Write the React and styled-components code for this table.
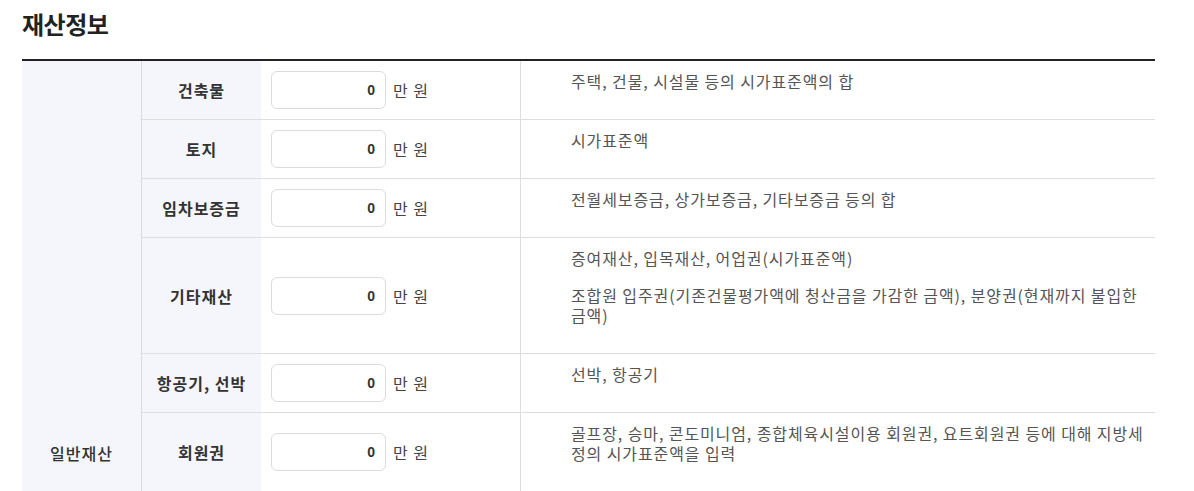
import React from 'react';
import styled, { createGlobalStyle } from 'styled-components';

const GlobalStyle = createGlobalStyle`
  body {
    margin: 0;
    background: #fff;
    font-family: "Noto Sans CJK KR", "Noto Sans", sans-serif;
    overflow: hidden;
  }
`;

const Page = styled.div`
  padding: 0 39px 0 22px;
`;

const Title = styled.h2`
  margin: 0;
  padding: 7px 0 0;
  height: 59px;
  box-sizing: border-box;
  font-size: 24px;
  line-height: 34px;
  font-weight: 700;
  color: #222;
  letter-spacing: -0.5px;
`;

const Table = styled.div`
  display: flex;
  border-top: 2px solid #222;
`;

const GroupCell = styled.div`
  width: 120px;
  flex-shrink: 0;
  background: #f5f6fb;
  border-right: 1px solid #dddddd;
  display: flex;
  align-items: flex-end;
  justify-content: center;
  padding-bottom: 28px;
  box-sizing: border-box;
  font-size: 16px;
  font-weight: 500;
  letter-spacing: 1px;
  color: #333;
  line-height: 22px;
`;

const Rows = styled.div`
  flex: 1;
  display: flex;
  flex-direction: column;
`;

const Row = styled.div`
  display: grid;
  grid-template-columns: 119px 260px 1fr;
  border-bottom: 1px solid #dedede;
`;

const Label = styled.div`
  background: #f5f6fb;
  display: flex;
  align-items: center;
  justify-content: center;
  font-size: 16px;
  font-weight: 700;
  letter-spacing: 1px;
  color: #333;
`;

const InputCell = styled.div`
  display: flex;
  align-items: center;
  gap: 7px;
  padding: 10px 10px;
  border-right: 1px solid #dedede;
`;

const Amount = styled.input`
  width: 115px;
  height: 38px;
  box-sizing: border-box;
  border: 1px solid #dcdcdc;
  border-radius: 6px;
  padding: 0 10px;
  text-align: right;
  font-family: "Liberation Sans", Arial, sans-serif;
  font-size: 14px;
  font-weight: 700;
  color: #333;
  outline: none;
`;

const Unit = styled.span`
  font-size: 16px;
  color: #444;
  letter-spacing: 1px;
`;

const Desc = styled.div`
  padding: 10px 0 28px 50px;
  font-size: 16px;
  line-height: 20px;
  letter-spacing: 0.9px;
  color: #555;

  p {
    margin: 0;
  }
  p + p {
    margin-top: 17px;
  }
`;

const items = [
  { label: '건축물', desc: ['주택, 건물, 시설물 등의 시가표준액의 합'] },
  { label: '토지', desc: ['시가표준액'] },
  { label: '임차보증금', desc: ['전월세보증금, 상가보증금, 기타보증금 등의 합'] },
  {
    label: '기타재산',
    desc: [
      '증여재산, 입목재산, 어업권(시가표준액)',
      '조합원 입주권(기존건물평가액에 청산금을 가감한 금액), 분양권(현재까지 불입한 금액)',
    ],
  },
  { label: '항공기, 선박', desc: ['선박, 항공기'] },
  {
    label: '회원권',
    desc: ['골프장, 승마, 콘도미니엄, 종합체육시설이용 회원권, 요트회원권 등에 대해 지방세정의 시가표준액을 입력'],
  },
];

const App = () => {
  return (
    <Page>
      <GlobalStyle />
      <Title>재산정보</Title>
      <Table>
        <GroupCell>일반재산</GroupCell>
        <Rows>
          {items.map((item) => (
            <Row key={item.label}>
              <Label>{item.label}</Label>
              <InputCell>
                <Amount type="text" defaultValue="0" />
                <Unit>만 원</Unit>
              </InputCell>
              <Desc>
                {item.desc.map((d) => (
                  <p key={d}>{d}</p>
                ))}
              </Desc>
            </Row>
          ))}
        </Rows>
      </Table>
    </Page>
  );
};

export default App;
